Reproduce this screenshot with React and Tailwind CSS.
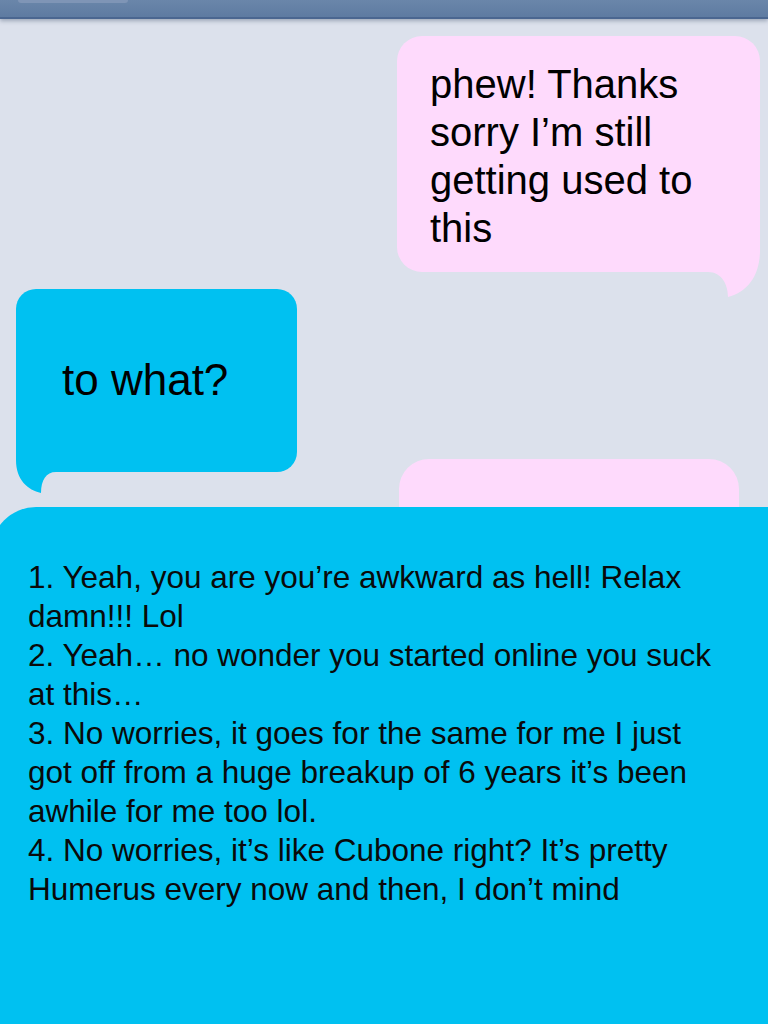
export default function App() {
    return (
        <div className="w-[768px] h-[1024px] overflow-hidden flex flex-col bg-[#dce1ec]">
            <div className="h-[19px] shrink-0 bg-gradient-to-b from-[#6a86aa] to-[#5e7ba1] border-b-2 border-[#4a6690] shadow-[0_2px_4px_rgba(40,60,90,0.35)] relative z-10">
                <div className="ml-[18px] w-[110px] h-[3px] rounded-b-[3px] bg-[#7f95b6]" />
            </div>

            <div className="flex flex-col font-['Liberation_Sans',Arial,sans-serif] text-black">
                <div className="relative self-end mr-[8px] mt-[17px] w-[363px] h-[236px] rounded-[25px] bg-[#fedafc] pl-[33px] pt-[24px] text-[40px] leading-[48px]">
                    phew! Thanks sorry I’m still getting used to this
                    <svg className="absolute left-[303px] top-[194px]" width="60" height="70" viewBox="0 0 60 70">
                        <path d="M0 0 H60 V20 C60 45 48 62 28 67 C28 55 22 42 8 42 H0 Z" fill="#fedafc" />
                    </svg>
                </div>

                <div className="relative ml-[16px] mt-[17px] w-[281px] h-[183px] rounded-[20px] bg-[#00c1f1] pl-[46px] pt-[67px] text-[44px] leading-[48px]">
                    to what?
                    <svg className="absolute left-0 top-[151px]" width="50" height="55" viewBox="0 0 50 55">
                        <path d="M0 0 H50 V32 H40 C30 32 25 40 25 53 C12 50 0 40 0 20 Z" fill="#00c1f1" />
                    </svg>
                </div>

                <div className="ml-[399px] -mt-[13px] w-[340px] h-[48px] rounded-t-[30px] bg-[#fedafc]" />
            </div>

            <div className="flex-1 -ml-[9px] w-[777px] rounded-tl-[45px] bg-[#00c1f1] pl-[37px] pt-[51px] font-['Liberation_Sans',Arial,sans-serif] text-[31.5px] leading-[39px] text-[#0a0a0a]">
                <div className="w-[705px]">
                    <p>1. Yeah, you are you’re awkward as hell! Relax damn!!! Lol</p>
                    <p>2. Yeah… no wonder you started online you suck at this…</p>
                    <p>3. No worries, it goes for the same for me I just got off from a huge breakup of 6 years it’s been awhile for me too lol.</p>
                    <p>4. No worries, it’s like Cubone right? It’s pretty Humerus every now and then, I don’t mind</p>
                </div>
            </div>
        </div>
    );
}
